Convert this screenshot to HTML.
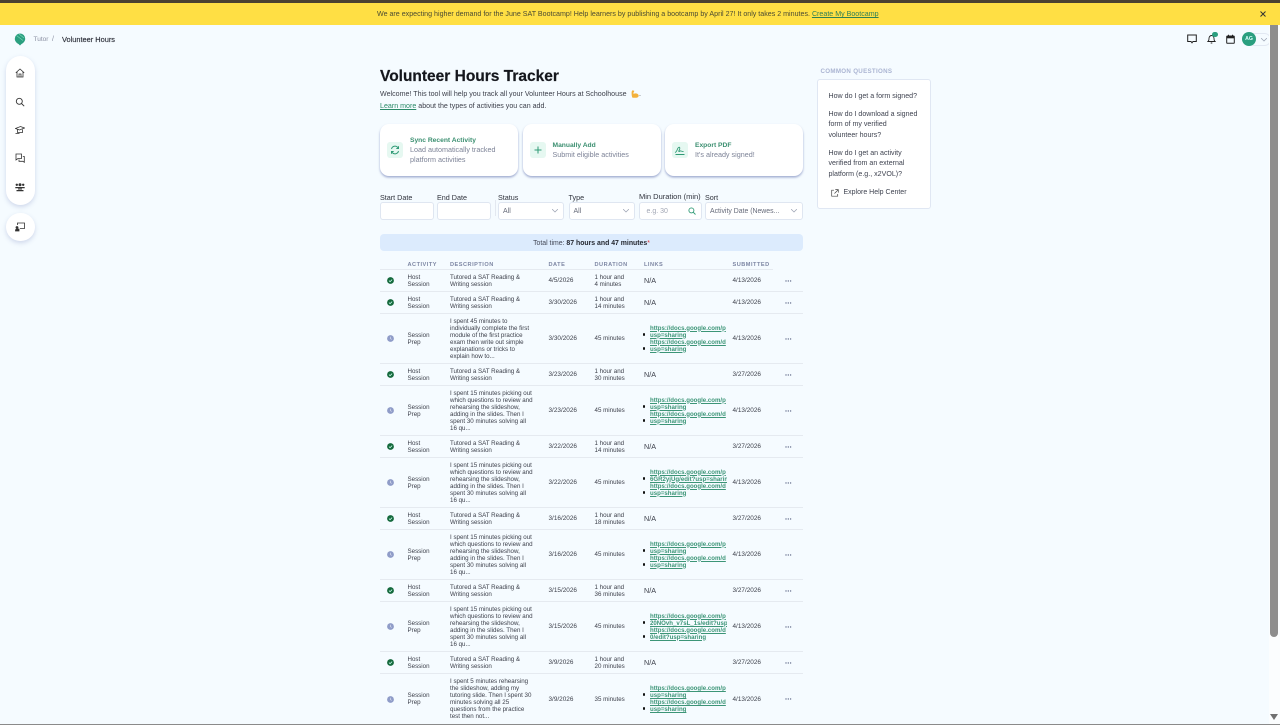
<!DOCTYPE html>
<html lang="en"><head><meta charset="utf-8"><title>Volunteer Hours</title>
<style>
*{box-sizing:border-box}
html,body{margin:0;padding:0;width:1280px;height:725px;overflow:hidden;background:#f5fbff;font-family:"Liberation Sans",sans-serif;color:#3c3f4a}
.a{position:absolute;white-space:nowrap}
a{color:#2b8a68;text-decoration:underline}
.card{position:absolute;top:124px;width:138px;height:52px;background:#fff;border-radius:9px;box-shadow:0 1.5px 2px rgba(90,105,170,.55)}
.ic{position:absolute;left:7px;top:18px;width:16px;height:16px;border-radius:3px;background:#e6f8f1}
.card b{position:absolute;left:30px;font-size:6.7px;color:#3b8f70;white-space:nowrap}
.card span{position:absolute;left:30px;font-size:7.2px;color:#7d8397;white-space:nowrap;line-height:10.5px}
.lb{position:absolute;font-size:7.2px;color:#30333d;white-space:nowrap}
.in{position:absolute;top:202px;height:18px;background:#fff;border:1px solid #dfe6f1;border-radius:3px;font-size:7px;color:#666b7a;line-height:17.5px;padding-left:4px;white-space:nowrap}
.in svg{position:absolute;right:5px;top:6px}
.th{position:absolute;top:262px;font-size:5.6px;font-weight:bold;letter-spacing:.5px;color:#7d86a3;white-space:nowrap}
.r{position:absolute;left:380px;width:423px;border-bottom:1px solid #e5eaf0;font-size:6.2px;line-height:7px;color:#3c3f4a}
.c{position:absolute;top:0;bottom:0;display:flex;align-items:center;white-space:nowrap}
.st{left:7px;width:7px}
.ac{left:27.5px}.de{left:70px}.da{left:168.5px;font-size:6.4px}.du{left:214.5px}.na{left:264px;font-size:7.2px}.li{left:270px;width:77px;overflow:hidden}.su{left:352.5px;font-size:6.4px}
.li a{font-weight:bold;font-size:6.1px;display:block;color:#3c9577}
.bu{position:absolute;left:262.5px;width:2.6px;height:2.6px;border-radius:50%;background:#111}
.b1{top:19px}.b2{top:33px}
.do{left:405px;width:8px;color:#6a7390}
.side{position:absolute;left:6px;width:29px;background:#fff;box-shadow:0 2px 5px rgba(120,135,190,.3)}
.side svg{position:absolute;left:9px}
.q{position:absolute;left:828.5px;font-size:7.08px;line-height:10.7px;color:#3f4350;white-space:nowrap}
</style></head><body>
<svg width="0" height="0" style="position:absolute"><defs>
<g id="ok"><circle cx="3.5" cy="3.5" r="3.4" fill="#14693c"/><path d="M2 3.6l1.1 1.1L5.1 2.6" fill="none" stroke="#cfe" stroke-width=".8"/></g>
<g id="pe"><circle cx="3.5" cy="3.5" r="3.4" fill="#8f9cc8"/><path d="M3.5 1.8v1.9l1.2.7" fill="none" stroke="#e5e9f5" stroke-width=".6"/></g>
<g id="dots" fill="#6a7390"><circle cx="1" cy="1" r=".7"/><circle cx="3.3" cy="1" r=".7"/><circle cx="5.6" cy="1" r=".7"/></g>
<path id="chev" d="M0 0l3 3 3-3" fill="none" stroke="#9aa1b2" stroke-width=".7"/>
</defs></svg>

<div class="a" style="left:0;top:0;width:1280px;height:3px;background:#4b4231"></div>
<div class="a" style="left:0;top:3px;width:1280px;height:22px;background:#ffdf44"></div>
<div class="a" style="left:377px;top:10px;font-size:7.1px;line-height:9px;color:#4a4a32">We are expecting higher demand for the June SAT Bootcamp! Help learners by publishing a bootcamp by April 27! It only takes 2 minutes. <a style="color:#2f7f55">Create My Bootcamp</a></div>
<svg class="a" style="left:1260px;top:11px" width="6" height="6"><path d="M.5.5l5 5M5.500.5l-5 5" stroke="#333" stroke-width="1"/></svg>

<!-- top left -->
<svg class="a" style="left:14px;top:33px" width="12" height="13" viewBox="0 0 12 13"><path d="M6 .5a5.200 5.200 0 0 1 5.200 5.200c0 2.600-2.200 4.600-3.700 5.300L6 12.500 4.500 11C3 10.300.8 8.300.8 5.700A5.200 5.200 0 0 1 6 .5z" fill="#2a9f7f"/><path d="M2.500 2.500l6.500 5M5 1l5 4" stroke="#7ad6b9" stroke-width=".6"/></svg>
<div class="a" style="left:33.500px;top:35px;font-size:6.500px;line-height:9px;color:#8b90a3">Tutor</div>
<div class="a" style="left:52px;top:35px;font-size:7px;line-height:9px;color:#8b90a3">/</div>
<div class="a" style="left:62px;top:35px;font-size:7.400px;line-height:9px;color:#2d303a;-webkit-text-stroke:.15px #2d303a">Volunteer Hours</div>

<!-- sidebar -->
<div class="side" style="top:56px;height:149px;border-radius:15px">
<svg style="top:12px" width="10" height="10" viewBox="0 0 10 10" fill="none" stroke="#333" stroke-width=".8"><path d="M.8 4.800L5 1l4.200 3.800M2 4v5h6V4M4 9V6h2v3"/></svg>
<svg style="top:41px" width="10" height="10" viewBox="0 0 10 10" fill="none" stroke="#333" stroke-width=".9"><circle cx="4.300" cy="4.300" r="3"/><path d="M6.500 6.500L9.200 9.200"/></svg>
<svg style="top:69px" width="10" height="10" viewBox="0 0 10 10" fill="none" stroke="#333" stroke-width=".8"><path d="M.5 3.500L5.500 1.500l4 1.500-5 2z M2.500 4.500v3h5v-4M.5 8.500h4"/></svg>
<svg style="top:97px" width="10" height="10" viewBox="0 0 10 10" fill="none" stroke="#333" stroke-width=".8"><path d="M1 1h5.500v4.500H3L1 7zM7.800 3.500H9.300v5.800L8 8.300H4V6.500"/></svg>
<svg style="top:126px" width="10" height="10" viewBox="0 0 10 10" fill="#333"><circle cx="5" cy="2.800" r="1.500"/><circle cx="1.800" cy="2.800" r="1.200"/><circle cx="8.200" cy="2.800" r="1.200"/><path d="M.3 5h9.400v1.200H.3zM3 6.500h4v1H3zM1.500 8h7v1.200h-7z"/></svg>
</div>
<div class="side" style="top:213px;height:28px;border-radius:14px">
<svg style="top:9px" width="10" height="10" viewBox="0 0 10 10" fill="none" stroke="#333" stroke-width=".8"><path d="M2.500 3V1h7v5.500H5"/><circle cx="2" cy="5.500" r="1" fill="#333"/><path d="M.5 8.500c0-1 .5-1.500 1.500-1.500h2V9H.5z" fill="#333"/></svg>
</div>

<!-- main heading -->
<div class="a" style="left:380px;top:68px;font-size:15.500px;line-height:18px;font-weight:bold;color:#15171d;-webkit-text-stroke:.2px #15171d">Volunteer Hours Tracker</div>
<div class="a" style="left:380px;top:89px;font-size:7.100px;line-height:10px;color:#3c3f4a">Welcome! This tool will help you track all your Volunteer Hours at Schoolhouse</div>
<svg class="a" style="left:630px;top:90px" width="9" height="8" viewBox="0 0 9 8"><path d="M2.500.3L4.200.8 4 2.200 3.400 2.300 3.600 4C5 3 7.500 3 8.500 5c.5 1.500-.5 2.700-2 2.700H2.500C1.500 6 1.500 3 1.700 1.500z" fill="#f3b13c"/></svg>
<div class="a" style="left:639px;top:89px;font-size:7.100px;line-height:10px;color:#3c3f4a">.</div>
<div class="a" style="left:380px;top:101px;font-size:7.100px;line-height:10px;color:#3c3f4a"><a>Learn more</a> about the types of activities you can add.</div>

<!-- cards -->
<div class="card" style="left:380px"><div class="ic"><svg width="16" height="16" viewBox="0 0 16 16" fill="none" stroke="#2f9a75" stroke-width="1"><path d="M4.500 7a3.600 3.600 0 0 1 6.300-1.500l.7.800M11.500 9a3.600 3.600 0 0 1-6.300 1.500l-.7-.8M11.500 4.300v2.200H9.300M4.500 11.700V9.500h2.200"/></svg></div><b style="top:13px">Sync Recent Activity</b><span style="top:20.500px">Load automatically tracked<br>platform activities</span></div>
<div class="card" style="left:522.500px"><div class="ic"><svg width="16" height="16" viewBox="0 0 16 16" stroke="#2f9a75" stroke-width="1"><path d="M8 4.500v7M4.500 8h7"/></svg></div><b style="top:18px">Manually Add</b><span style="top:26px">Submit eligible activities</span></div>
<div class="card" style="left:665px"><div class="ic"><svg width="16" height="16" viewBox="0 0 16 16" fill="none" stroke="#2f9a75" stroke-width=".9"><path d="M3 10.500c1.500-.5 2-2 2.500-3.500s2-2.500 2.300-1-1.800 3.500-.8 3.500 1-1 2-.5 1.500.5 2.500.5M3.500 12.500h9"/></svg></div><b style="top:18px">Export PDF</b><span style="top:26px">It's already signed!</span></div>

<!-- filters -->
<div class="lb" style="left:380px;top:192.500px">Start Date</div>
<div class="lb" style="left:437px;top:192.500px">End Date</div>
<div class="lb" style="left:498px;top:192.500px">Status</div>
<div class="lb" style="left:568.500px;top:192.500px">Type</div>
<div class="lb" style="left:639px;top:191.500px;font-size:7.500px">Min Duration (min)</div>
<div class="lb" style="left:705px;top:192.500px">Sort</div>
<div class="a" style="left:494.500px;top:200px;width:1px;height:16px;background:#e3e8f0"></div>
<div class="in" style="left:380px;width:54px"></div>
<div class="in" style="left:437px;width:54px"></div>
<div class="in" style="left:498px;width:66px">All<svg width="6" height="4"><use href="#chev"/></svg></div>
<div class="in" style="left:568.500px;width:66.500px">All<svg width="6" height="4"><use href="#chev"/></svg></div>
<div class="in" style="left:638.500px;width:63.500px;color:#a2a7b5;padding-left:7px">e.g. 30<svg style="top:4px;right:5px" width="8" height="8" viewBox="0 0 8 8" fill="none" stroke="#2f9a75" stroke-width=".9"><circle cx="3.400" cy="3.400" r="2.500"/><path d="M5.200 5.200L7.500 7.500"/></svg></div>
<div class="in" style="left:705px;width:98px;font-size:6.900px">Activity Date (Newes...<svg width="6" height="4"><use href="#chev"/></svg></div>

<div class="a" style="left:380px;top:234px;width:423px;height:17px;background:#dcebfd;border-radius:4px;font-size:6.900px;line-height:19px;text-align:center;color:#444857">Total time: <b style="color:#23262f">87 hours and 47 minutes</b><span style="color:#d33">*</span></div>

<div class="th" style="left:407.500px">ACTIVITY</div>
<div class="th" style="left:450px">DESCRIPTION</div>
<div class="th" style="left:548.500px">DATE</div>
<div class="th" style="left:594.500px">DURATION</div>
<div class="th" style="left:644px">LINKS</div>
<div class="th" style="left:732.500px">SUBMITTED</div>
<div class="a" style="left:380px;top:269px;width:393px;height:1px;background:#e5eaf0"></div>

<div class="r" style="top:270px;height:22px"><div class="c st"><svg width="7" height="7"><use href="#ok"/></svg></div><div class="c ac">Host<br>Session</div><div class="c de">Tutored a SAT Reading &amp;<br>Writing session</div><div class="c da">4/5/2026</div><div class="c du">1 hour and<br>4 minutes</div><div class="c na">N/A</div><div class="c su">4/13/2026</div><div class="c do"><svg width="7" height="2"><use href="#dots"/></svg></div></div>

<div class="r" style="top:292px;height:22px"><div class="c st"><svg width="7" height="7"><use href="#ok"/></svg></div><div class="c ac">Host<br>Session</div><div class="c de">Tutored a SAT Reading &amp;<br>Writing session</div><div class="c da">3/30/2026</div><div class="c du">1 hour and<br>14 minutes</div><div class="c na">N/A</div><div class="c su">4/13/2026</div><div class="c do"><svg width="7" height="2"><use href="#dots"/></svg></div></div>

<div class="r" style="top:314px;height:50px"><div class="c st"><svg width="7" height="7"><use href="#pe"/></svg></div><div class="c ac">Session<br>Prep</div><div class="c de">I spent 45 minutes to<br>individually complete the first<br>module of the first practice<br>exam then write out simple<br>explanations or tricks to<br>explain how to...</div><div class="c da">3/30/2026</div><div class="c du">45 minutes</div><div class="bu b1"></div><div class="bu b2"></div><div class="c li"><div><a>https://docs.google.com/p</a><a>usp=sharing</a><a>https://docs.google.com/d</a><a>usp=sharing</a></div></div><div class="c su">4/13/2026</div><div class="c do"><svg width="7" height="2"><use href="#dots"/></svg></div></div>

<div class="r" style="top:364px;height:22px"><div class="c st"><svg width="7" height="7"><use href="#ok"/></svg></div><div class="c ac">Host<br>Session</div><div class="c de">Tutored a SAT Reading &amp;<br>Writing session</div><div class="c da">3/23/2026</div><div class="c du">1 hour and<br>30 minutes</div><div class="c na">N/A</div><div class="c su">3/27/2026</div><div class="c do"><svg width="7" height="2"><use href="#dots"/></svg></div></div>

<div class="r" style="top:386px;height:50px"><div class="c st"><svg width="7" height="7"><use href="#pe"/></svg></div><div class="c ac">Session<br>Prep</div><div class="c de">I spent 15 minutes picking out<br>which questions to review and<br>rehearsing the slideshow,<br>adding in the slides. Then I<br>spent 30 minutes solving all<br>16 qu...</div><div class="c da">3/23/2026</div><div class="c du">45 minutes</div><div class="bu b1"></div><div class="bu b2"></div><div class="c li"><div><a>https://docs.google.com/p</a><a>usp=sharing</a><a>https://docs.google.com/d</a><a>usp=sharing</a></div></div><div class="c su">4/13/2026</div><div class="c do"><svg width="7" height="2"><use href="#dots"/></svg></div></div>

<div class="r" style="top:436px;height:22px"><div class="c st"><svg width="7" height="7"><use href="#ok"/></svg></div><div class="c ac">Host<br>Session</div><div class="c de">Tutored a SAT Reading &amp;<br>Writing session</div><div class="c da">3/22/2026</div><div class="c du">1 hour and<br>14 minutes</div><div class="c na">N/A</div><div class="c su">3/27/2026</div><div class="c do"><svg width="7" height="2"><use href="#dots"/></svg></div></div>

<div class="r" style="top:458px;height:50px"><div class="c st"><svg width="7" height="7"><use href="#pe"/></svg></div><div class="c ac">Session<br>Prep</div><div class="c de">I spent 15 minutes picking out<br>which questions to review and<br>rehearsing the slideshow,<br>adding in the slides. Then I<br>spent 30 minutes solving all<br>16 qu...</div><div class="c da">3/22/2026</div><div class="c du">45 minutes</div><div class="bu b1"></div><div class="bu b2"></div><div class="c li"><div><a>https://docs.google.com/p</a><a>6GR2yjUg/edit?usp=sharin</a><a>https://docs.google.com/d</a><a>usp=sharing</a></div></div><div class="c su">4/13/2026</div><div class="c do"><svg width="7" height="2"><use href="#dots"/></svg></div></div>

<div class="r" style="top:508px;height:22px"><div class="c st"><svg width="7" height="7"><use href="#ok"/></svg></div><div class="c ac">Host<br>Session</div><div class="c de">Tutored a SAT Reading &amp;<br>Writing session</div><div class="c da">3/16/2026</div><div class="c du">1 hour and<br>18 minutes</div><div class="c na">N/A</div><div class="c su">3/27/2026</div><div class="c do"><svg width="7" height="2"><use href="#dots"/></svg></div></div>

<div class="r" style="top:530px;height:50px"><div class="c st"><svg width="7" height="7"><use href="#pe"/></svg></div><div class="c ac">Session<br>Prep</div><div class="c de">I spent 15 minutes picking out<br>which questions to review and<br>rehearsing the slideshow,<br>adding in the slides. Then I<br>spent 30 minutes solving all<br>16 qu...</div><div class="c da">3/16/2026</div><div class="c du">45 minutes</div><div class="bu b1"></div><div class="bu b2"></div><div class="c li"><div><a>https://docs.google.com/p</a><a>usp=sharing</a><a>https://docs.google.com/d</a><a>usp=sharing</a></div></div><div class="c su">4/13/2026</div><div class="c do"><svg width="7" height="2"><use href="#dots"/></svg></div></div>

<div class="r" style="top:580px;height:22px"><div class="c st"><svg width="7" height="7"><use href="#ok"/></svg></div><div class="c ac">Host<br>Session</div><div class="c de">Tutored a SAT Reading &amp;<br>Writing session</div><div class="c da">3/15/2026</div><div class="c du">1 hour and<br>36 minutes</div><div class="c na">N/A</div><div class="c su">3/27/2026</div><div class="c do"><svg width="7" height="2"><use href="#dots"/></svg></div></div>

<div class="r" style="top:602px;height:50px"><div class="c st"><svg width="7" height="7"><use href="#pe"/></svg></div><div class="c ac">Session<br>Prep</div><div class="c de">I spent 15 minutes picking out<br>which questions to review and<br>rehearsing the slideshow,<br>adding in the slides. Then I<br>spent 30 minutes solving all<br>16 qu...</div><div class="c da">3/15/2026</div><div class="c du">45 minutes</div><div class="bu b1"></div><div class="bu b2"></div><div class="c li"><div><a>https://docs.google.com/p</a><a>20NOvh_v7sL_1s/edit?usp=</a><a>https://docs.google.com/d</a><a>0/edit?usp=sharing</a></div></div><div class="c su">4/13/2026</div><div class="c do"><svg width="7" height="2"><use href="#dots"/></svg></div></div>

<div class="r" style="top:652px;height:22px"><div class="c st"><svg width="7" height="7"><use href="#ok"/></svg></div><div class="c ac">Host<br>Session</div><div class="c de">Tutored a SAT Reading &amp;<br>Writing session</div><div class="c da">3/9/2026</div><div class="c du">1 hour and<br>20 minutes</div><div class="c na">N/A</div><div class="c su">3/27/2026</div><div class="c do"><svg width="7" height="2"><use href="#dots"/></svg></div></div>

<div class="r" style="top:674px;height:50px;border-bottom:0"><div class="c st"><svg width="7" height="7"><use href="#pe"/></svg></div><div class="c ac">Session<br>Prep</div><div class="c de">I spent 5 minutes rehearsing<br>the slideshow, adding my<br>tutoring slide. Then I spent 30<br>minutes solving all 25<br>questions from the practice<br>test then not...</div><div class="c da">3/9/2026</div><div class="c du">35 minutes</div><div class="bu b1"></div><div class="bu b2"></div><div class="c li"><div><a>https://docs.google.com/p</a><a>usp=sharing</a><a>https://docs.google.com/d</a><a>usp=sharing</a></div></div><div class="c su">4/13/2026</div><div class="c do"><svg width="7" height="2"><use href="#dots"/></svg></div></div>

<!-- right panel -->
<div class="a" style="left:820.500px;top:68px;font-size:6.200px;line-height:8px;font-weight:bold;letter-spacing:.3px;color:#aab4d2">COMMON QUESTIONS</div>
<div class="a" style="left:817px;top:79px;width:114px;height:130px;background:#fff;border:1px solid #e0e7f3;border-radius:3px"></div>
<div class="q" style="top:90.500px">How do I get a form signed?</div>
<div class="q" style="top:108.500px">How do I download a signed<br>form of my verified<br>volunteer hours?</div>
<div class="q" style="top:147.500px">How do I get an activity<br>verified from an external<br>platform (e.g., x2VOL)?</div>
<svg class="a" style="left:831px;top:188.500px" width="8" height="8" viewBox="0 0 8 8" fill="none" stroke="#444" stroke-width=".7"><path d="M3 1.200H.7v6h6V5M4.300.6h3v3M7.200.7L3.500 4.500"/></svg>
<div class="q" style="left:843.500px;top:187.500px;font-size:7px">Explore Help Center</div>

<!-- top right -->
<svg class="a" style="left:1187px;top:34px" width="10" height="10" viewBox="0 0 10 10" fill="none" stroke="#222" stroke-width="1"><path d="M.7 1h8.600v6.500H6L5 8.800 4 7.500H.7z"/></svg>
<svg class="a" style="left:1207px;top:34px" width="9" height="10" viewBox="0 0 9 10" fill="none" stroke="#222" stroke-width=".9"><path d="M1 7.500c1-.8 1-2 1-3.200S3 1.500 4.500 1.500 7 3 7 4.300s0 2.400 1 3.200zM3.700 9h1.600"/></svg>
<div class="a" style="left:1212px;top:32px;width:6px;height:5px;border-radius:3px;background:#2a9f7f"></div>
<svg class="a" style="left:1226px;top:34px" width="9" height="10" viewBox="0 0 9 10"><rect x=".7" y="2" width="7.600" height="7.300" rx=".8" fill="none" stroke="#222"/><rect x=".7" y="2" width="7.600" height="2.300" fill="#222"/><path d="M2.500.7v1.500M6.500.7v1.500" stroke="#222"/></svg>
<div class="a" style="left:1248px;top:32.500px;width:23px;height:13px;border:1px solid #e2e8f2;border-radius:7px"></div>
<svg class="a" style="left:1260.500px;top:38px" width="6" height="4"><use href="#chev"/></svg>
<div class="a" style="left:1242px;top:32px;width:14px;height:14px;border-radius:50%;background:#2a9f7f;color:#dff;font-size:5.200px;font-weight:bold;line-height:14px;text-align:center">AG</div>

<!-- scrollbar -->
<div class="a" style="left:1269px;top:25px;width:11px;height:699px;background:#fbfdfe"></div>
<div class="a" style="left:1270px;top:25px;width:8px;height:612px;background:#8d8d8d;border-radius:0 0 4px 4px"></div>
<svg class="a" style="left:1270px;top:714px" width="8" height="6"><path d="M0 0h8L4 6z" fill="#707070"/></svg>
<div class="a" style="left:0;top:724px;width:1280px;height:1px;background:#8a8a8a"></div>
</body></html>
